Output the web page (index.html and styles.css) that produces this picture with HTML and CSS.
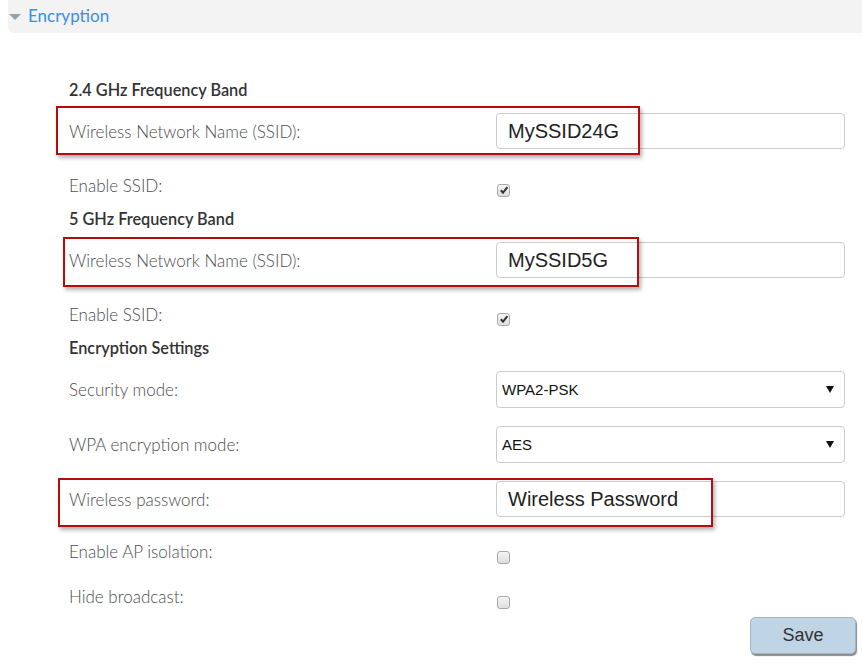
FILE: index.html
```html
<!DOCTYPE html>
<html>
<head>
<meta charset="utf-8">
<link rel="stylesheet" href="styles.css">
</head>
<body>
<div class="header">
  <span class="caret"></span>
  <span class="header-title">Encryption</span>
</div>
<div class="form">
  <div class="heading h1">2.4 GHz Frequency Band</div>
  <div class="row field-row r1">
    <div class="label">Wireless Network Name (SSID):</div>
    <div class="input">MySSID24G</div>
    <div class="annot a1"></div>
  </div>
  <div class="row check-row r2">
    <div class="label">Enable SSID:</div>
    <span class="checkbox checked"><svg viewBox="0 0 10 10" width="10" height="10"><path d="M1.8 5.2 L4 7.6 L8.4 2.2" fill="none" stroke="#333" stroke-width="2"/></svg></span>
  </div>
  <div class="heading h2">5 GHz Frequency Band</div>
  <div class="row field-row r1">
    <div class="label">Wireless Network Name (SSID):</div>
    <div class="input">MySSID5G</div>
    <div class="annot a2"></div>
  </div>
  <div class="row check-row r2">
    <div class="label">Enable SSID:</div>
    <span class="checkbox checked"><svg viewBox="0 0 10 10" width="10" height="10"><path d="M1.8 5.2 L4 7.6 L8.4 2.2" fill="none" stroke="#333" stroke-width="2"/></svg></span>
  </div>
  <div class="heading h2">Encryption Settings</div>
  <div class="row field-row r1">
    <div class="label">Security mode:</div>
    <div class="select"><span>WPA2-PSK</span><span class="arrow"></span></div>
  </div>
  <div class="row field-row r3">
    <div class="label">WPA encryption mode:</div>
    <div class="select"><span>AES</span><span class="arrow"></span></div>
  </div>
  <div class="row field-row r3">
    <div class="label">Wireless password:</div>
    <div class="input">Wireless Password</div>
    <div class="annot a3"></div>
  </div>
  <div class="row check-row r4">
    <div class="label">Enable AP isolation:</div>
    <span class="checkbox"></span>
  </div>
  <div class="row check-row r5">
    <div class="label">Hide broadcast:</div>
    <span class="checkbox"></span>
  </div>
  <div class="actions">
    <button class="save">Save</button>
  </div>
</div>
</body>
</html>
```
FILE: styles.css
```css
html, body {
  margin: 0;
  padding: 0;
  background: #fff;
}
body {
  font-family: "Lato", "Open Sans", sans-serif;
  width: 862px;
  height: 664px;
  overflow: hidden;
}
.header {
  margin-left: 8px;
  height: 33px;
  background: #f3f3f3;
  border-bottom-left-radius: 6px;
  display: flex;
  align-items: center;
  padding-bottom: 2px;
  box-sizing: border-box;
}
.caret {
  width: 0;
  height: 0;
  border-left: 6px solid transparent;
  border-right: 6px solid transparent;
  border-top: 6px solid #8ea3ae;
  margin-left: 1px;
  margin-top: 3px;
}
.header-title {
  margin-left: 7px;
  color: #3a8ee8;
  font-size: 17px;
}
.form {
  padding-left: 69px;
  padding-top: 47px;
}
.heading {
  height: 20px;
  line-height: 20px;
  font-size: 16.3px;
  color: #333;
  font-weight: 600;
}
.h2 { margin-top: 6px; }
.row {
  display: flex;
  align-items: center;
  position: relative;
}
.label {
  width: 427px;
  flex: none;
  font-size: 17px;
  color: #4d4d4d;
  font-weight: 300;
}
.field-row { height: 36px; }
.r1 { margin-top: 13px; }
.r3 { margin-top: 19px; }
.check-row { height: 36px; }
.r2 { margin-top: 18px; }
.r4 { margin-top: 16px; }
.r5 { margin-top: 9px; }
.input, .select {
  width: 349px;
  height: 36px;
  box-sizing: border-box;
  border: 1px solid #ccc;
  border-radius: 4px;
  font-family: "Liberation Sans", Arial, sans-serif;
  color: #222;
  display: flex;
  align-items: center;
}
.input {
  font-size: 20px;
  padding-left: 11px;
}
.select {
  font-size: 15px;
  padding-left: 5px;
  padding-right: 10px;
  justify-content: space-between;
  height: 37px;
  color: #111;
}
.arrow {
  width: 0;
  height: 0;
  border-left: 4px solid transparent;
  border-right: 4px solid transparent;
  border-top: 7px solid #111;
  margin-top: 1px;
}
.checkbox {
  width: 13px;
  height: 13px;
  box-sizing: border-box;
  border: 1px solid #a9a9a9;
  border-radius: 3px;
  background: linear-gradient(#f4f4f4, #dedede);
  margin-left: 1px;
  margin-top: 10px;
  display: flex;
  align-items: center;
  justify-content: center;
}
.r4 .checkbox, .r5 .checkbox { margin-top: 12px; }
.annot {
  position: absolute;
  border: 2px solid #b80c0c;
  box-shadow: 2px 3px 4px rgba(0,0,0,0.3);
  pointer-events: none;
}
.a1 { left: -13px; top: -7px; width: 580px; height: 45px; }
.a2 { left: -6px; top: -5px; width: 572px; height: 46px; }
.a3 { left: -11px; top: -3px; width: 651px; height: 45px; }
.actions {
  display: flex;
  justify-content: flex-end;
  width: 787px;
  margin-top: 3px;
}
.save {
  width: 106px;
  height: 37px;
  background: #bfd4e4;
  border: 1px solid #a8b4bc;
  border-radius: 5px;
  box-shadow: 1px 2px 1px #8a8a8a;
  font-family: "Liberation Sans", Arial, sans-serif;
  font-size: 18px;
  color: #333;
  padding: 0;
}
```
